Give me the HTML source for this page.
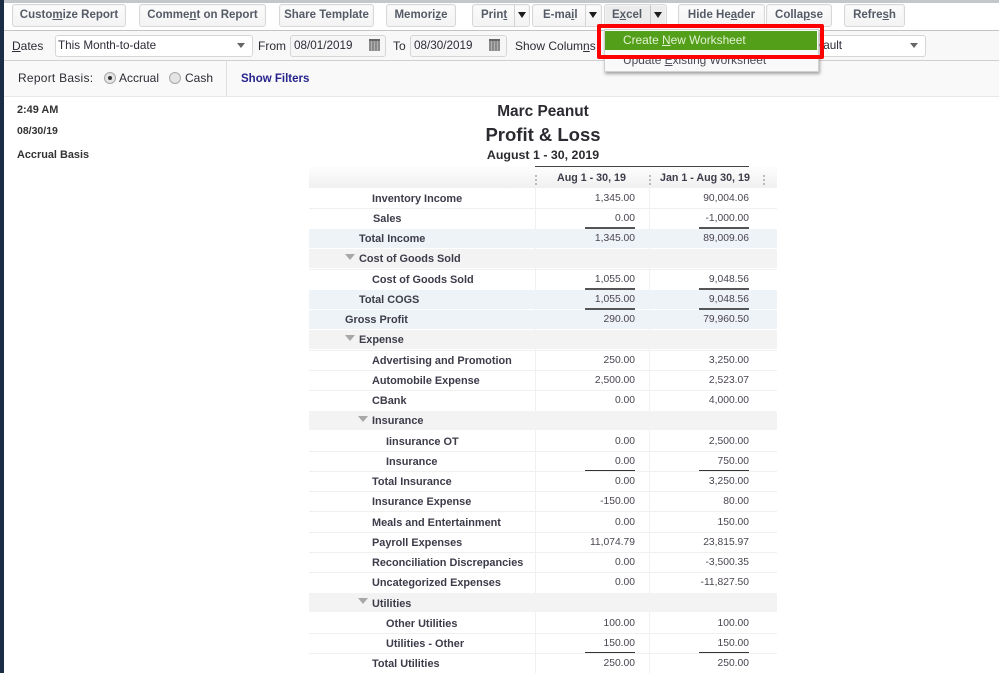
<!DOCTYPE html>
<html><head><meta charset="utf-8"><style>
html,body{margin:0;padding:0;width:999px;height:673px;overflow:hidden;background:#fff}
body{position:relative;font-family:"Liberation Sans",sans-serif;color:#3a3a48}
div,span.a{position:absolute;white-space:nowrap;box-sizing:border-box}
u{text-decoration:underline}
.b{top:4px;height:23px;border:1px solid #d8d8d8;border-radius:3px;background:linear-gradient(#fcfcfc,#f3f3f3);font:bold 11.5px/21px "Liberation Sans",sans-serif;color:#555b66;text-align:center;box-shadow:0 0 0 1px #f4f4f4 inset}
.sep{top:5px;width:1px;height:21px;background:#d4d4d4}
.tri{width:0;height:0;border-left:4px solid transparent;border-right:4px solid transparent;border-top:6px solid #1c1c1c;top:12px}
.l{font:12px/14px "Liberation Sans",sans-serif;color:#2c2c34}
.f{top:35px;height:22px;border:1px solid #d6d6d6;border-radius:3px;background:#fff;font:11.7px/19px "Liberation Sans",sans-serif;color:#2c2c38;padding-left:2px}
.date{background:#f6f6f6}
.cal{width:11px;height:12px;top:39px;border-top:2px solid #666;background:repeating-linear-gradient(90deg,#8a8a8a 0 2px,#b0b0b0 2px 3px)}
.dd{width:0;height:0;border-left:4px solid transparent;border-right:4px solid transparent;border-top:5px solid #666;top:43px}
.t{margin-top:1px;font:bold 10.9px/14px "Liberation Sans",sans-serif;color:#3c3c4a}
.n{margin-top:1px;font:10.3px/14px "Liberation Sans",sans-serif;color:#4a4450;text-align:right;width:80px}
.c1{left:555px}.c2{left:669px}
.bg{left:309px;width:468px;height:19px;border-radius:1px}
.blue{background:#eef3f7}.gray{background:#f3f3f3}
.hl{left:309px;width:468px;height:1px;background:#f0f0f0}
.vl{width:1px;background:#f0f0f0}
.ul1{left:585px;width:50px;height:1px;background:#333}
.ul2{left:699px;width:50px;height:1px;background:#333}
.ar{width:0;height:0;border-left:5px solid transparent;border-right:5px solid transparent;border-top:6px solid #a8a8a8}
</style></head><body>
<div style="left:0;top:0;width:999px;height:3px;background:#c3c6ca"></div>
<div style="left:0;top:0;width:4px;height:673px;background:#1a2d44"></div>
<div style="left:4px;top:3px;width:995px;height:27px;background:#fff"></div>
<div style="left:4px;top:30px;width:995px;height:1px;background:#c4c4c4"></div>
<div style="left:4px;top:31px;width:995px;height:30px;background:#f8f8f8"></div>
<div style="left:4px;top:60px;width:995px;height:1px;background:#d0d0d0"></div>
<div style="left:4px;top:61px;width:995px;height:35px;background:#f9f9f9"></div>
<div style="left:4px;top:96px;width:995px;height:1px;background:#e8e8e8"></div>
<div style="left:226px;top:61px;width:1px;height:35px;background:#dedede"></div>

<div class="b" style="left:12px;width:114px">Custo<u>m</u>ize Report</div>
<div class="b" style="left:139px;width:127px">Comme<u>n</u>t on Report</div>
<div class="b" style="left:279px;width:95px">Share Template</div>
<div class="b" style="left:386px;width:70px">Memori<u>z</u>e</div>
<div class="b" style="left:472px;width:58px;text-align:left;padding-left:8px">Prin<u>t</u></div>
<div class="sep" style="left:514px"></div><div class="tri" style="left:518px"></div>
<div class="b" style="left:532px;width:70px;text-align:left;padding-left:10px">E-ma<u>i</u>l</div>
<div class="sep" style="left:585px"></div><div class="tri" style="left:589px"></div>
<div class="b" style="left:604px;width:63px;text-align:left;padding-left:7px;background:#ececec">E<u>x</u>cel</div>
<div class="sep" style="left:650px;background:#c8c8c8"></div><div class="tri" style="left:654px"></div>
<div class="b" style="left:678px;width:87px">Hide He<u>a</u>der</div>
<div class="b" style="left:766px;width:66px">Colla<u>p</u>se</div>
<div class="b" style="left:844px;width:61px">Refre<u>s</u>h</div>

<div class="l" style="left:12px;top:39px"><u>D</u>ates</div>
<div class="f" style="left:55px;width:198px">This Month-to-date</div><div class="dd" style="left:237px"></div>
<div class="l" style="left:258px;top:39px">From</div>
<div class="f date" style="left:290px;width:96px;padding-left:3px">08/01/2019</div><div class="cal" style="left:369px"></div>
<div class="l" style="left:393px;top:39px">To</div>
<div class="f date" style="left:410px;width:97px;padding-left:3px">08/30/2019</div><div class="cal" style="left:489px"></div>
<div class="l" style="left:515px;top:39px">Show Colum<u>n</u>s</div>
<div class="f" style="left:800px;width:126px;padding-left:4px">Default</div><div class="dd" style="left:910px"></div>

<div class="l" style="left:18px;top:71px;letter-spacing:.25px">Report Basis:</div>
<div style="left:104px;top:72px;width:12px;height:12px;border-radius:50%;border:1px solid #a8a8a8;background:#e4e4e4"></div>
<div style="left:108px;top:76px;width:4px;height:4px;border-radius:50%;background:#333"></div>
<div class="l" style="left:119px;top:71px">Accrual</div>
<div style="left:169px;top:72px;width:12px;height:12px;border-radius:50%;border:1px solid #a8a8a8;background:#e4e4e4"></div>
<div class="l" style="left:185px;top:71px">Cash</div>
<div style="left:241px;top:72px;font:bold 11.5px/15px 'Liberation Sans',sans-serif;color:#26238c">Show Filters</div>

<div class="t" style="left:17px;top:102px;color:#333">2:49 AM</div>
<div class="t" style="left:17px;top:123px;font-size:10.5px;color:#333">08/30/19</div>
<div class="t" style="left:17px;top:147px;color:#333">Accrual Basis</div>

<div style="left:309px;width:468px;text-align:center;top:102px;font:bold 15.4px/19px 'Liberation Sans',sans-serif;color:#2a2a30">Marc Peanut</div>
<div style="left:309px;width:468px;text-align:center;top:123px;font:bold 18.5px/24px 'Liberation Sans',sans-serif;color:#2a2a30">Profit &amp; Loss</div>
<div style="left:309px;width:468px;text-align:center;top:148px;font:bold 12.4px/15px 'Liberation Sans',sans-serif;color:#2a2a30">August 1 - 30, 2019</div>

<div style="left:535px;top:166px;width:214px;height:1px;background:#444"></div>
<div style="left:309px;top:167px;width:468px;height:21px;background:linear-gradient(#fdfdfd,#f0f0f0)"></div>
<div class="t" style="left:557px;top:170px;font-size:10.7px">Aug 1 - 30, 19</div>
<div class="t" style="left:660px;top:170px;font-size:10.7px">Jan 1 - Aug 30, 19</div>
<div style="left:535px;top:175px;width:2px;height:10px;border-left:2px dotted #bbb"></div>
<div style="left:649px;top:175px;width:2px;height:10px;border-left:2px dotted #bbb"></div>
<div style="left:763px;top:175px;width:2px;height:10px;border-left:2px dotted #bbb"></div>

<div class="vl" style="left:535px;top:188px;height:485px"></div>
<div class="vl" style="left:649px;top:188px;height:485px"></div>

<div class="hl" style="top:208px"></div><div class="hl" style="top:269px"></div><div class="hl" style="top:370px"></div><div class="hl" style="top:390px"></div><div class="hl" style="top:451px"></div><div class="hl" style="top:471px"></div><div class="hl" style="top:491px"></div><div class="hl" style="top:511px"></div><div class="hl" style="top:532px"></div><div class="hl" style="top:552px"></div><div class="hl" style="top:572px"></div><div class="hl" style="top:633px"></div><div class="hl" style="top:653px"></div><div class="hl" style="top:350px"></div>

<div class="bg blue" style="top:229px"></div>
<div class="bg gray" style="top:249px"></div>
<div class="bg blue" style="top:290px"></div>
<div class="bg blue" style="top:310px"></div>
<div class="bg gray" style="top:330px"></div>
<div class="bg gray" style="top:411px"></div>
<div class="bg gray" style="top:593px"></div>

<div class="t" style="left:372px;top:191px">Inventory Income</div><div class="n c1" style="top:191px">1,345.00</div><div class="n c2" style="top:191px">90,004.06</div>
<div class="t" style="left:373px;top:211px">Sales</div><div class="n c1" style="top:211px">0.00</div><div class="n c2" style="top:211px">-1,000.00</div>
<div class="ul1" style="top:227px;height:2px;background:#555"></div><div class="ul2" style="top:227px;height:2px;background:#555"></div>
<div class="t" style="left:359px;top:231px">Total Income</div><div class="n c1" style="top:231px">1,345.00</div><div class="n c2" style="top:231px">89,009.06</div>
<div class="ar" style="left:345px;top:254px"></div><div class="t" style="left:359px;top:251px">Cost of Goods Sold</div>
<div class="t" style="left:372px;top:272px">Cost of Goods Sold</div><div class="n c1" style="top:272px">1,055.00</div><div class="n c2" style="top:272px">9,048.56</div>
<div class="ul1" style="top:288px;height:2px;background:#555"></div><div class="ul2" style="top:288px;height:2px;background:#555"></div>
<div class="t" style="left:359px;top:292px">Total COGS</div><div class="n c1" style="top:292px">1,055.00</div><div class="n c2" style="top:292px">9,048.56</div>
<div class="ul1" style="top:308px;height:2px;background:#555"></div><div class="ul2" style="top:308px;height:2px;background:#555"></div>
<div class="t" style="left:345px;top:312px">Gross Profit</div><div class="n c1" style="top:312px">290.00</div><div class="n c2" style="top:312px">79,960.50</div>
<div class="ar" style="left:345px;top:335px"></div><div class="t" style="left:359px;top:332px">Expense</div>
<div class="t" style="left:372px;top:353px">Advertising and Promotion</div><div class="n c1" style="top:353px">250.00</div><div class="n c2" style="top:353px">3,250.00</div>
<div class="t" style="left:372px;top:373px">Automobile Expense</div><div class="n c1" style="top:373px">2,500.00</div><div class="n c2" style="top:373px">2,523.07</div>
<div class="t" style="left:372px;top:393px">CBank</div><div class="n c1" style="top:393px">0.00</div><div class="n c2" style="top:393px">4,000.00</div>
<div class="ar" style="left:358px;top:416px"></div><div class="t" style="left:372px;top:413px">Insurance</div>
<div class="t" style="left:386px;top:434px">Iinsurance OT</div><div class="n c1" style="top:434px">0.00</div><div class="n c2" style="top:434px">2,500.00</div>
<div class="t" style="left:386px;top:454px">Insurance</div><div class="n c1" style="top:454px">0.00</div><div class="n c2" style="top:454px">750.00</div>
<div class="ul1" style="top:470px"></div><div class="ul2" style="top:470px"></div>
<div class="t" style="left:372px;top:474px">Total Insurance</div><div class="n c1" style="top:474px">0.00</div><div class="n c2" style="top:474px">3,250.00</div>
<div class="t" style="left:372px;top:494px">Insurance Expense</div><div class="n c1" style="top:494px">-150.00</div><div class="n c2" style="top:494px">80.00</div>
<div class="t" style="left:372px;top:515px">Meals and Entertainment</div><div class="n c1" style="top:515px">0.00</div><div class="n c2" style="top:515px">150.00</div>
<div class="t" style="left:372px;top:535px">Payroll Expenses</div><div class="n c1" style="top:535px">11,074.79</div><div class="n c2" style="top:535px">23,815.97</div>
<div class="t" style="left:372px;top:555px">Reconciliation Discrepancies</div><div class="n c1" style="top:555px">0.00</div><div class="n c2" style="top:555px">-3,500.35</div>
<div class="t" style="left:372px;top:575px">Uncategorized Expenses</div><div class="n c1" style="top:575px">0.00</div><div class="n c2" style="top:575px">-11,827.50</div>
<div class="ar" style="left:358px;top:598px"></div><div class="t" style="left:372px;top:596px">Utilities</div>
<div class="t" style="left:386px;top:616px">Other Utilities</div><div class="n c1" style="top:616px">100.00</div><div class="n c2" style="top:616px">100.00</div>
<div class="t" style="left:386px;top:636px">Utilities - Other</div><div class="n c1" style="top:636px">150.00</div><div class="n c2" style="top:636px">150.00</div>
<div class="ul1" style="top:652px"></div><div class="ul2" style="top:652px"></div>
<div class="t" style="left:372px;top:656px">Total Utilities</div><div class="n c1" style="top:656px">250.00</div><div class="n c2" style="top:656px">250.00</div>

<div style="left:604px;top:29px;width:215px;height:43px;background:#f9f9f9;border:1px solid #d0d0d0;box-shadow:1px 2px 3px rgba(0,0,0,.35)"></div>
<div style="left:605px;top:31px;width:212px;height:19px;background:#539f19"></div>
<div style="left:623px;top:33px;font:11.9px/15px 'Liberation Sans',sans-serif;color:#e4f2d4">Create <u>N</u>ew Worksheet</div>
<div style="left:623px;top:53px;font:11.9px/15px 'Liberation Sans',sans-serif;color:#4a4a58">Update <u>E</u>xisting Worksheet</div>
<div style="left:597px;top:24px;width:227px;height:35px;border:4px solid #f00;border-radius:2px"></div>
</body></html>
